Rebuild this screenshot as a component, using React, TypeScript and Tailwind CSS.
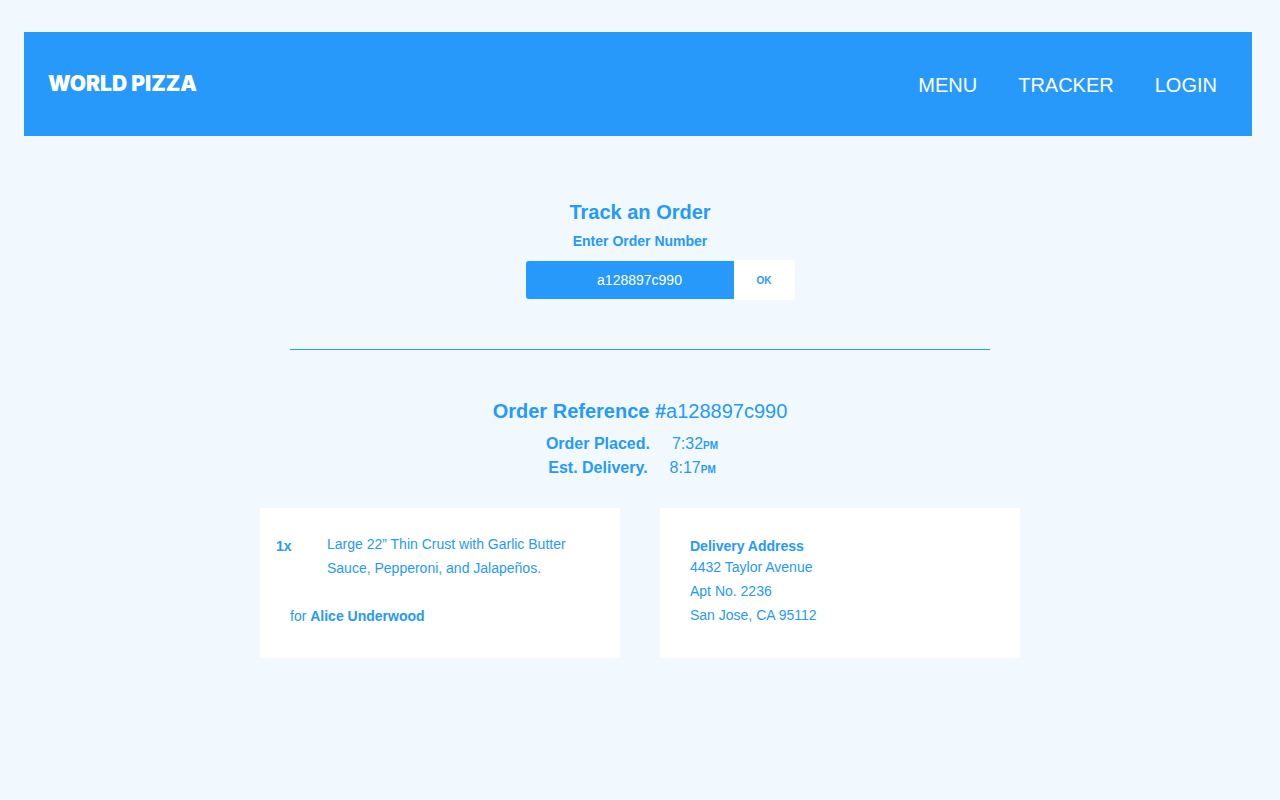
import { useState } from "react";

const links = ["MENU", "TRACKER", "LOGIN"];

const times = [
  { label: "Order Placed.", time: "7:32" },
  { label: "Est. Delivery.", time: "8:17" },
];

function Header() {
  return (
    <header className="flex h-26 items-center justify-between bg-[#2699fb] pl-6 pr-[35px] text-white">
      <a href="#" className="font-['Inter','Liberation_Sans',sans-serif] text-[21px] leading-6 font-black">
        WORLD PIZZA
      </a>
      <nav className="flex gap-[41px] pt-0.5 text-xl leading-6">
        {links.map((link) => (
          <a key={link} href="#">
            {link}
          </a>
        ))}
      </nav>
    </header>
  );
}

function TrackForm() {
  const [order, setOrder] = useState("a128897c990");
  return (
    <section className="flex flex-col items-center">
      <h1 className="text-xl leading-6 font-bold">Track an Order</h1>
      <form className="flex flex-col items-center pt-[5px]" onSubmit={(e) => e.preventDefault()}>
        <label htmlFor="order" className="text-sm leading-6 font-bold">
          Enter Order Number
        </label>
        <div className="mt-[7px] flex items-center pl-10">
          <input
            id="order"
            value={order}
            onChange={(e) => setOrder(e.target.value)}
            className="h-[38px] w-52 rounded-l-[3px] bg-[#2699fb] pl-5 text-center text-sm text-white outline-none"
          />
          <button className="h-10 w-[61px] rounded-r-[3px] bg-white text-[10px] font-bold">OK</button>
        </div>
      </form>
    </section>
  );
}

export default function App() {
  return (
    <div className="min-h-screen bg-[#f1f9ff] pt-8 pb-12 font-['Liberation_Sans',Arial,sans-serif] text-[#2699fb]">
      <div className="pl-6 pr-7">
        <Header />
      </div>
      <main className="mx-auto flex max-w-[760px] flex-col pt-16">
        <TrackForm />
        <hr className="mx-[30px] mt-[49px] mb-[49px] border-t border-[#2699fb]" />
        <section>
          <h2 className="text-center text-xl leading-6 font-bold">
            Order Reference #<span className="font-normal">a128897c990</span>
          </h2>
          <dl className="mt-[9px] pr-4 leading-6">
            {times.map(({ label, time }) => (
              <div key={label} className="flex justify-center gap-[22px]">
                <dt className="font-bold">{label}</dt>
                <dd>
                  {time}
                  <span className="text-[10px] leading-none font-bold">PM</span>
                </dd>
              </div>
            ))}
          </dl>
        </section>
        <div className="mt-7 grid grid-cols-2 gap-10 text-sm leading-6">
          <section className="min-h-[150px] bg-white px-4 pt-6 pb-7">
            <div className="flex">
              <strong className="w-[51px] shrink-0 pt-1 leading-5">1x</strong>
              <p className="max-w-64">Large 22” Thin Crust with Garlic Butter Sauce, Pepperoni, and Jalapeños.</p>
            </div>
            <p className="mt-6 pl-[14px]">
              for <strong>Alice Underwood</strong>
            </p>
          </section>
          <section className="min-h-[150px] bg-white px-[30px] pt-[29px] pb-7">
            <h3 className="leading-[18px] font-bold">Delivery Address</h3>
            <address className="not-italic">
              4432 Taylor Avenue
              <br />
              Apt No. 2236
              <br />
              San Jose, CA 95112
            </address>
          </section>
        </div>
      </main>
    </div>
  );
}
